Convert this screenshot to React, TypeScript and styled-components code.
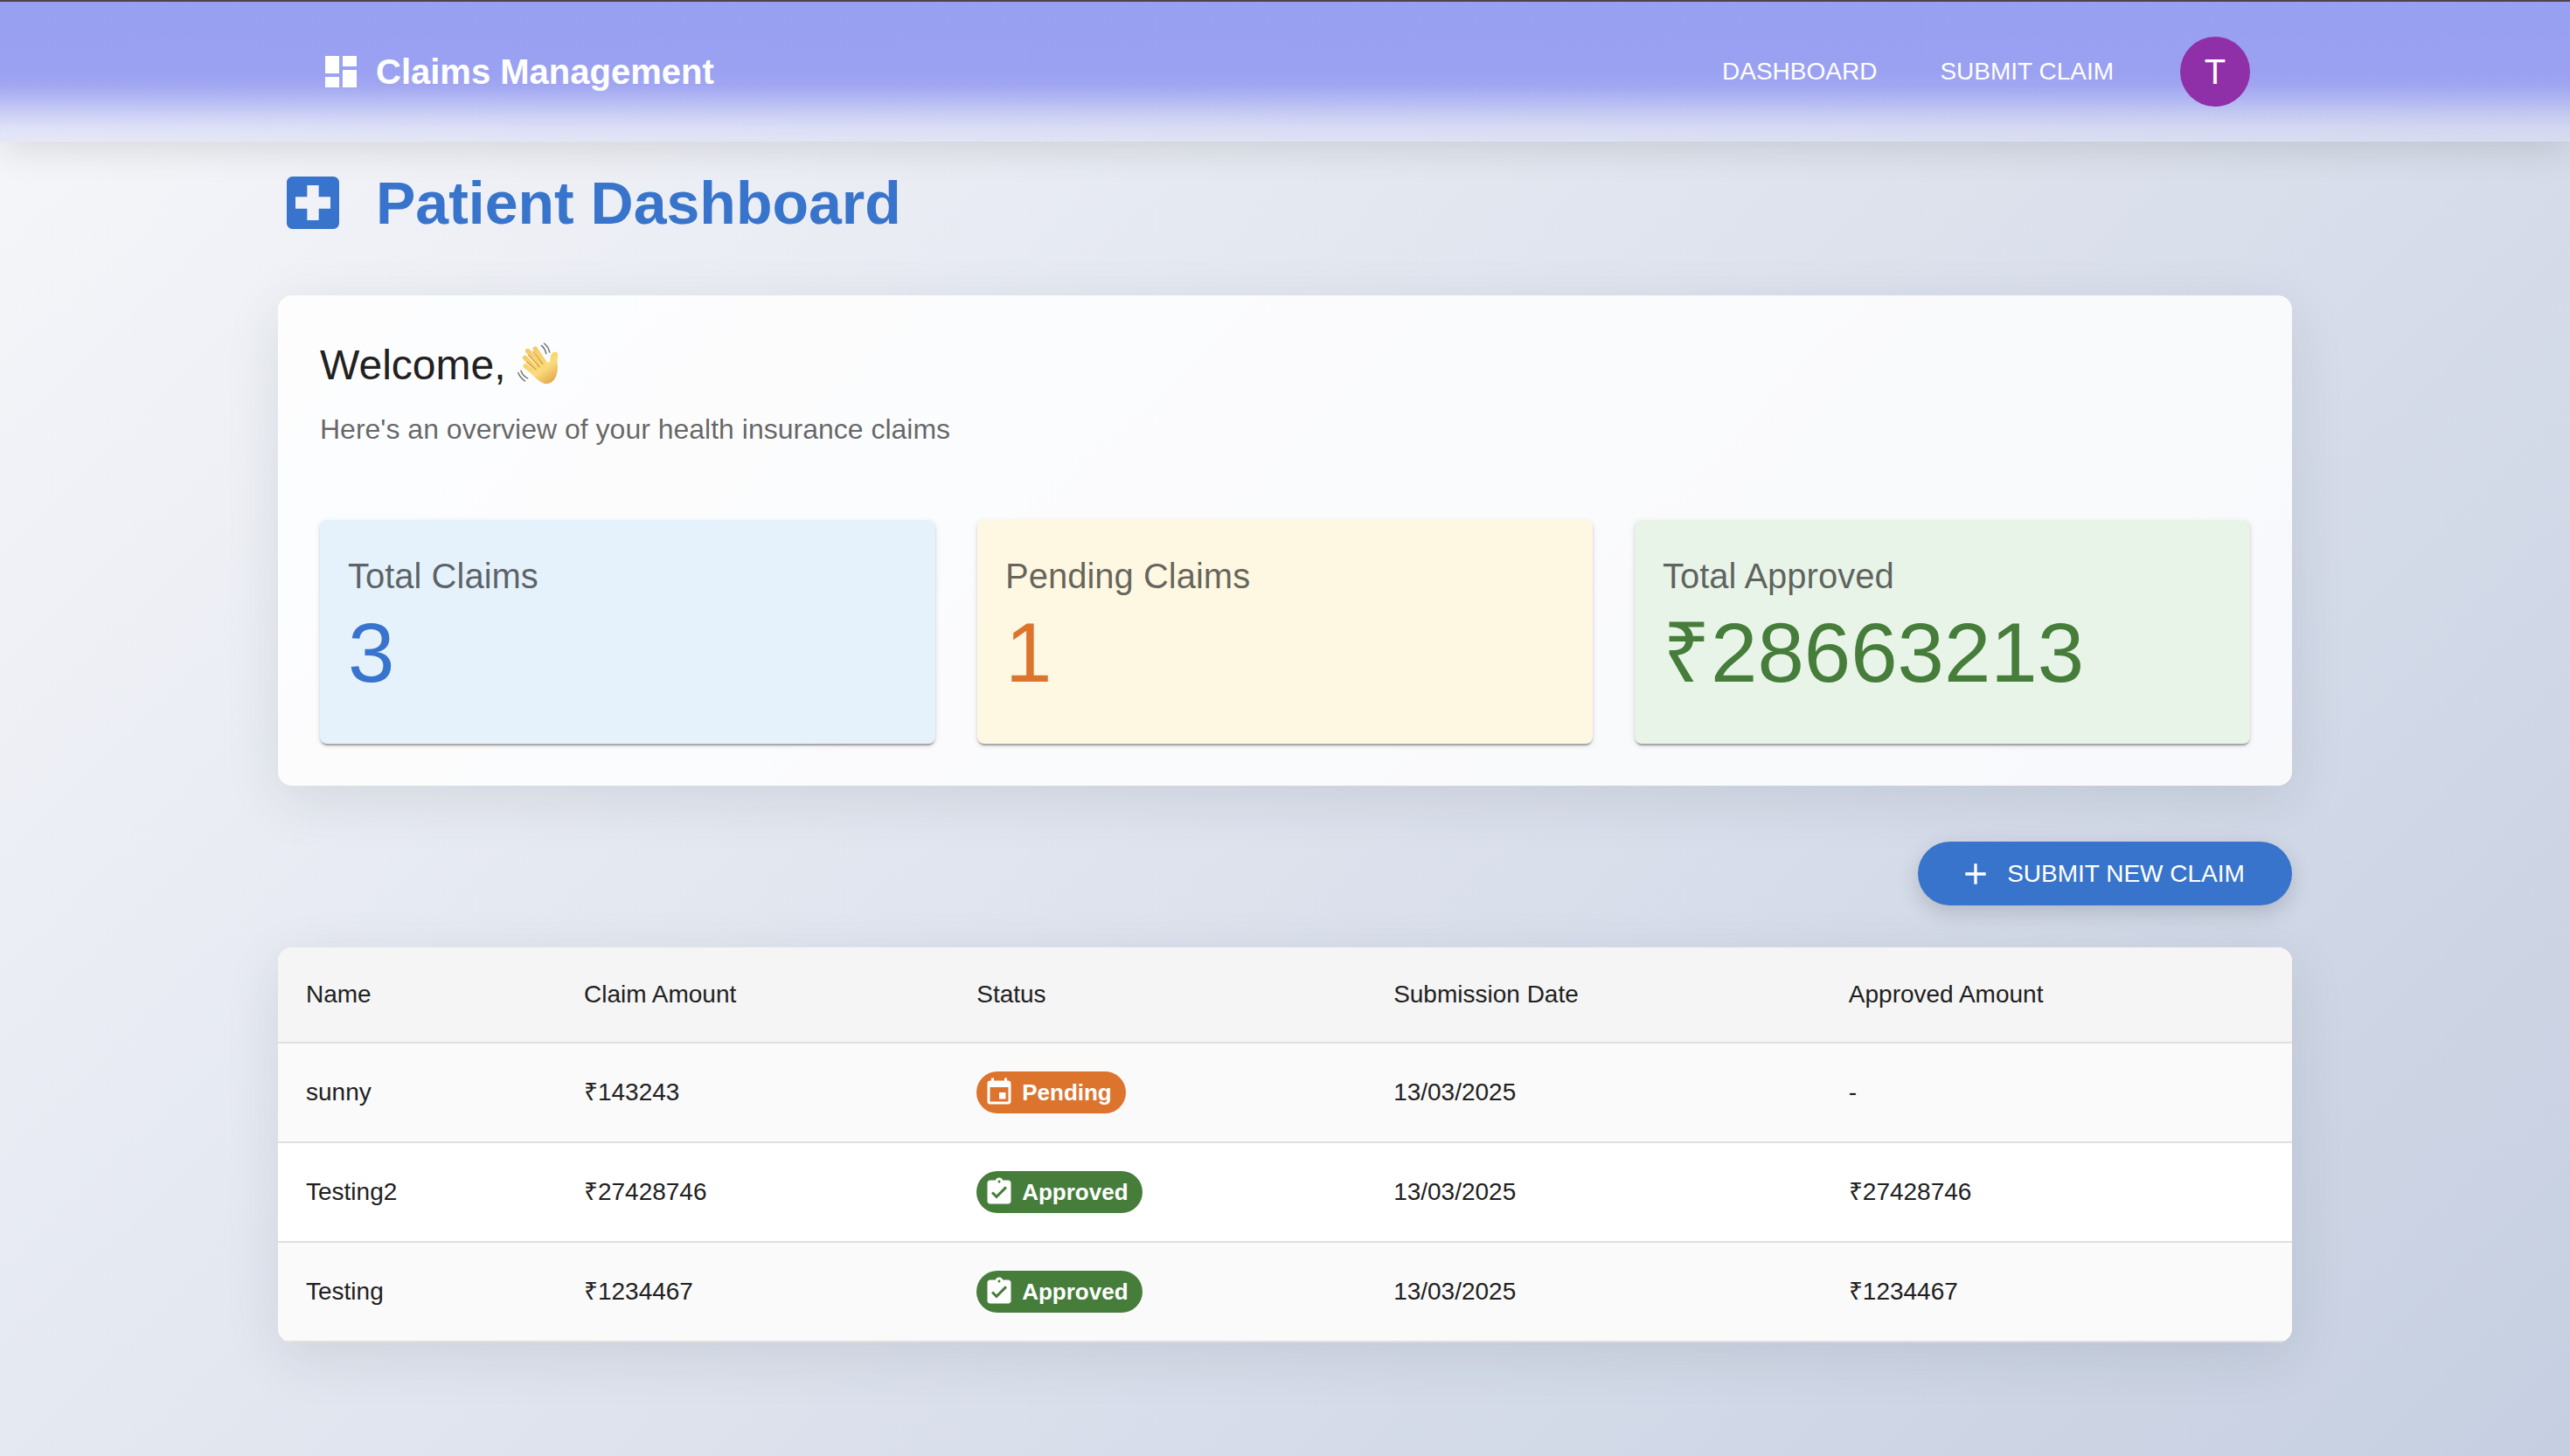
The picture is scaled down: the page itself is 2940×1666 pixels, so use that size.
import React from "react";
import styled, { createGlobalStyle } from "styled-components";
import {
  MdAdd,
  MdAssignmentTurnedIn,
  MdDashboard,
  MdEvent,
  MdLocalHospital,
} from "react-icons/md";

const color = {
  primary: "#3874cb",
  warning: "#dc742e",
  success: "#467d3b",
  avatar: "#8f30a8",
  text: "#212121",
  muted: "rgba(0, 0, 0, 0.6)",
  line: "#e0e0e0",
};

const GlobalStyle = createGlobalStyle`
  *, *::before, *::after { box-sizing: border-box; }
  html { min-height: 100%; }
  body {
    margin: 0;
    color: ${color.text};
    font-family: "Liberation Sans", Arial, Helvetica, sans-serif;
    font-size: 28px;
  }
`;

const Page = styled.div`
  min-height: 100vh;
  background: linear-gradient(135deg, #f6f7fa 0%, #e3e7f0 40%, #c6cfe1 100%);
`;

const TopBar = styled.header`
  border-top: 2px solid #4f434c;
  background:
    linear-gradient(
      to bottom,
      rgba(152, 160, 242, 1) 0%,
      rgba(154, 161, 241, 1) 50%,
      rgba(156, 161, 241, 0.92) 60%,
      rgba(156, 163, 242, 0.64) 71%,
      rgba(156, 163, 242, 0.34) 81%,
      rgba(156, 163, 242, 0.12) 90%,
      rgba(156, 163, 242, 0.02) 100%
    ),
    linear-gradient(rgba(220, 222, 246, 0.53), rgba(220, 222, 246, 0.53));
  box-shadow: 0 8px 40px rgba(0, 0, 0, 0.12);
`;

const Container = styled.div`
  max-width: 2400px;
  margin: 0 auto;
  padding: 0 48px;
`;

const Toolbar = styled.div`
  display: flex;
  align-items: center;
  justify-content: space-between;
  height: 160px;
  padding: 0 48px;
`;

const Brand = styled.a`
  display: flex;
  align-items: center;
  gap: 16px;
  color: #fff;
  font-size: 40px;
  font-weight: 700;
  line-height: 64px;
  text-decoration: none;
`;

const Nav = styled.nav`
  display: flex;
  align-items: center;
  gap: 40px;
`;

const NavLink = styled.a`
  padding: 12px 16px;
  color: #fff;
  line-height: 48px;
  text-transform: uppercase;
  text-decoration: none;
`;

const Avatar = styled.button`
  width: 80px;
  height: 80px;
  margin-left: 20px;
  padding: 0;
  border: 0;
  border-radius: 50%;
  background: ${color.avatar};
  color: #fff;
  font: inherit;
  font-size: 40px;
`;

const Main = styled.main`
  padding: 28px 0 128px;
`;

const Title = styled.h1`
  display: flex;
  align-items: center;
  gap: 32px;
  margin: 0 0 64px;
  color: ${color.primary};
  font-size: 68px;
  line-height: 84px;
`;

const Overview = styled.section`
  padding: 48px;
  border-radius: 16px;
  background: rgba(255, 255, 255, 0.84);
  box-shadow: 0 16px 64px rgba(31, 38, 50, 0.1);
`;

const Welcome = styled.h2`
  display: flex;
  align-items: center;
  gap: 13px;
  margin: 0 0 17px;
  font-size: 48px;
  font-weight: 400;
  line-height: 64px;
`;

const Subtitle = styled.p`
  margin: 0 0 80px;
  color: ${color.muted};
  font-size: 32px;
  line-height: 48px;
`;

const Stats = styled.div`
  display: grid;
  grid-template-columns: repeat(3, 1fr);
  gap: 48px;
`;

const StatCard = styled.article<{ $background: string }>`
  padding: 32px 32px 48px;
  border-radius: 8px;
  background: ${(p) => p.$background};
  box-shadow:
    0 4px 2px -2px rgba(0, 0, 0, 0.2),
    0 2px 2px rgba(0, 0, 0, 0.14),
    0 2px 6px rgba(0, 0, 0, 0.12);
`;

const StatLabel = styled.h3`
  margin: 0;
  color: ${color.muted};
  font-size: 40px;
  font-weight: 400;
  line-height: 64px;
`;

const StatValue = styled.p<{ $color: string }>`
  margin: 0;
  color: ${(p) => p.$color};
  font-size: 96px;
  line-height: 112px;
`;

const Actions = styled.div`
  display: flex;
  justify-content: flex-end;
  margin: 64px 0 48px;
`;

const SubmitButton = styled.button`
  display: flex;
  align-items: center;
  justify-content: center;
  gap: 16px;
  min-width: 428px;
  padding: 12px 48px 12px 40px;
  border: 0;
  border-radius: 40px;
  background: ${color.primary};
  box-shadow: 0 8px 24px rgba(0, 0, 0, 0.16);
  color: #fff;
  font: inherit;
  line-height: 49px;
  text-transform: uppercase;
`;

const TableCard = styled.div`
  overflow: hidden;
  border-radius: 16px;
  background: #fff;
  box-shadow: 0 16px 64px rgba(31, 38, 50, 0.1);
`;

const Table = styled.table`
  width: 100%;
  border-collapse: separate;
  border-spacing: 0;
  table-layout: fixed;
`;

const Column = styled.col<{ $share: number }>`
  width: ${(p) => p.$share}%;
`;

const HeadCell = styled.th`
  padding: 32px;
  border-bottom: 2px solid ${color.line};
  background: #f5f5f5;
  font-weight: 400;
  line-height: 44px;
  text-align: left;
`;

const Row = styled.tr`
  background: #fff;
  &:nth-child(odd) {
    background: #fafafa;
  }
`;

const Cell = styled.td`
  padding: 32px;
  border-bottom: 2px solid ${color.line};
  line-height: 48px;
`;

const Chip = styled.span<{ $color: string }>`
  display: flex;
  align-items: center;
  gap: 8px;
  width: fit-content;
  height: 48px;
  padding: 0 16px 0 8px;
  border-radius: 24px;
  background: ${(p) => p.$color};
  color: #fff;
  font-size: 26px;
  font-weight: 700;
`;

function WavingHand() {
  return (
    <svg width="50" height="50" viewBox="0 0 64 64" overflow="visible" role="img" aria-label="Waving hand">
      <defs>
        <linearGradient id="skin" gradientUnits="userSpaceOnUse" x1="12" y1="8" x2="50" y2="62">
          <stop offset="0" stopColor="#f4c95f" />
          <stop offset="0.6" stopColor="#fadb7c" />
          <stop offset="1" stopColor="#dfa042" />
        </linearGradient>
      </defs>
      <g fill="none" stroke="url(#skin)" strokeLinecap="round">
        <path d="M12 33 29 47" strokeWidth="7" />
        <path d="M11 21 34 43" strokeWidth="7" />
        <path d="M15 11 38 37" strokeWidth="7" />
        <path d="M26 8 43 33" strokeWidth="7" />
      </g>
      <path
        d="M20 36 41 26C45 30 48 28 48 23C48 17 51 12 55 12C59 12 60 16 59 20C57 26 60 33 58 43C56 52 51 58 44 59C36 60 27 52 16 39Z"
        fill="url(#skin)"
      />
      <path
        d="M14 27 27 38M16 17 32 34M23 12 37 30"
        fill="none"
        stroke="#cf9433"
        strokeWidth="1.4"
        strokeLinecap="round"
      />
      <g fill="none" stroke="#6d6d6d" strokeWidth="1.8" strokeLinecap="round">
        <path d="M35 3C39 6 41 10 42 15M39 0C43 3 46 8 47 13" />
        <path d="M5 40C7 45 10 49 15 51M1 43C3 48 6 52 11 55" />
      </g>
    </svg>
  );
}

const stats = [
  { label: "Total Claims", value: "3", background: "#e5f2fc", color: color.primary },
  { label: "Pending Claims", value: "1", background: "#fef7e2", color: color.warning },
  { label: "Total Approved", value: "₹28663213", background: "#e9f4e9", color: color.success },
];

const columns = [
  { title: "Name", share: 13.8 },
  { title: "Claim Amount", share: 19.5 },
  { title: "Status", share: 20.7 },
  { title: "Submission Date", share: 22.6 },
  { title: "Approved Amount", share: 23.4 },
];

type Status = "Pending" | "Approved";

const claims: { name: string; amount: string; status: Status; date: string; approved: string }[] = [
  { name: "sunny", amount: "₹143243", status: "Pending", date: "13/03/2025", approved: "-" },
  { name: "Testing2", amount: "₹27428746", status: "Approved", date: "13/03/2025", approved: "₹27428746" },
  { name: "Testing", amount: "₹1234467", status: "Approved", date: "13/03/2025", approved: "₹1234467" },
];

function StatusChip({ status }: { status: Status }) {
  const pending = status === "Pending";
  const Icon = pending ? MdEvent : MdAssignmentTurnedIn;
  return (
    <Chip $color={pending ? color.warning : color.success}>
      <Icon size={36} aria-hidden />
      {status}
    </Chip>
  );
}

export default function App() {
  return (
    <Page>
      <GlobalStyle />
      <TopBar>
        <Container>
          <Toolbar>
            <Brand href="#">
              <MdDashboard size={48} aria-hidden />
              Claims Management
            </Brand>
            <Nav aria-label="Main">
              <NavLink href="#dashboard">Dashboard</NavLink>
              <NavLink href="#submit">Submit Claim</NavLink>
              <Avatar type="button" aria-label="Account T">
                T
              </Avatar>
            </Nav>
          </Toolbar>
        </Container>
      </TopBar>
      <Container>
        <Main>
          <Title>
            <MdLocalHospital size={80} aria-hidden />
            Patient Dashboard
          </Title>
          <Overview>
            <Welcome>
              Welcome,
              <WavingHand />
            </Welcome>
            <Subtitle>Here's an overview of your health insurance claims</Subtitle>
            <Stats>
              {stats.map((s) => (
                <StatCard key={s.label} $background={s.background}>
                  <StatLabel>{s.label}</StatLabel>
                  <StatValue $color={s.color}>{s.value}</StatValue>
                </StatCard>
              ))}
            </Stats>
          </Overview>
          <Actions>
            <SubmitButton type="button">
              <MdAdd size={40} aria-hidden />
              Submit New Claim
            </SubmitButton>
          </Actions>
          <TableCard>
            <Table>
              <colgroup>
                {columns.map((c) => (
                  <Column key={c.title} $share={c.share} />
                ))}
              </colgroup>
              <thead>
                <tr>
                  {columns.map((c) => (
                    <HeadCell key={c.title} scope="col">
                      {c.title}
                    </HeadCell>
                  ))}
                </tr>
              </thead>
              <tbody>
                {claims.map((c) => (
                  <Row key={c.name}>
                    <Cell>{c.name}</Cell>
                    <Cell>{c.amount}</Cell>
                    <Cell>
                      <StatusChip status={c.status} />
                    </Cell>
                    <Cell>{c.date}</Cell>
                    <Cell>{c.approved}</Cell>
                  </Row>
                ))}
              </tbody>
            </Table>
          </TableCard>
        </Main>
      </Container>
    </Page>
  );
}
